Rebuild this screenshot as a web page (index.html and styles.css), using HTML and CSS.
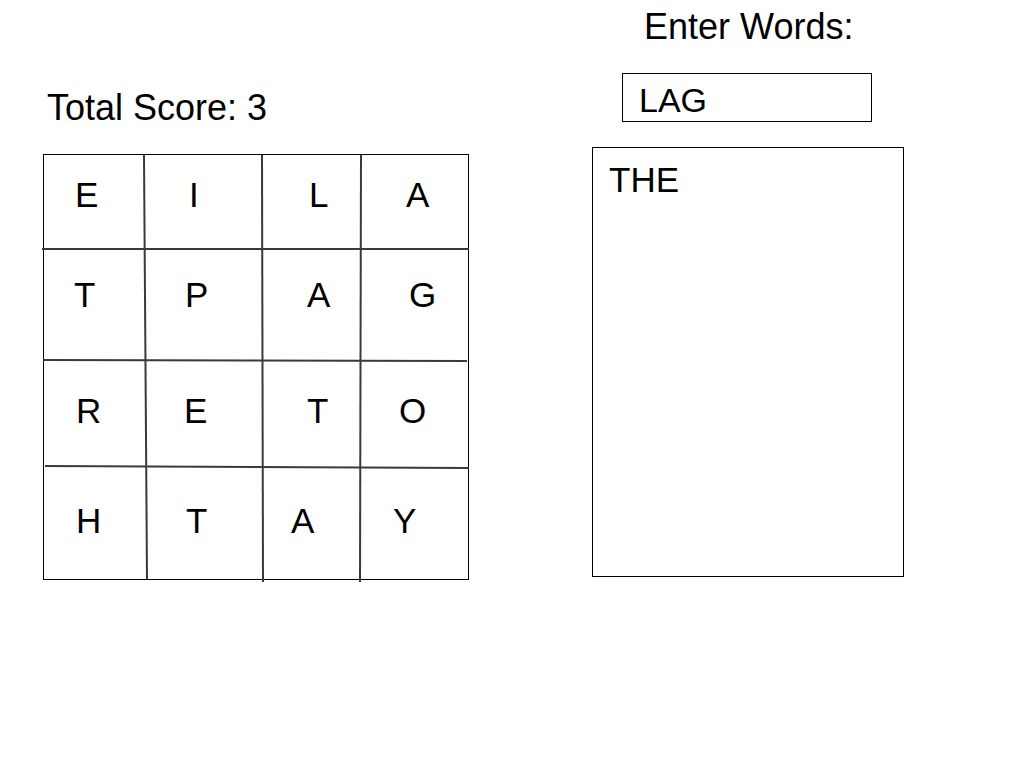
FILE: index.html
```html
<!DOCTYPE html>
<html>
<head>
<meta charset="utf-8">
<title>Word Game</title>
<link rel="stylesheet" href="styles.css">
</head>
<body>
<div class="page">
  <section class="left">
    <div class="score">Total Score: 3</div>
    <div class="board">
      <div class="cells">
        <div class="cell">E</div><div class="cell">I</div><div class="cell">L</div><div class="cell">A</div>
        <div class="cell">T</div><div class="cell">P</div><div class="cell">A</div><div class="cell">G</div>
        <div class="cell">R</div><div class="cell">E</div><div class="cell">T</div><div class="cell">O</div>
        <div class="cell">H</div><div class="cell">T</div><div class="cell">A</div><div class="cell">Y</div>
      </div>
      <svg class="lines" width="426" height="430" viewBox="0 0 426 430">
        <line x1="101" y1="1" x2="104" y2="425"/>
        <line x1="219" y1="1" x2="220" y2="428"/>
        <line x1="318" y1="1" x2="317" y2="428"/>
        <line x1="-1" y1="95" x2="426" y2="95"/>
        <line x1="0" y1="206" x2="424" y2="207"/>
        <line x1="2" y1="312" x2="426" y2="314"/>
      </svg>
    </div>
  </section>
  <section class="right">
    <div class="title">Enter Words:</div>
    <div class="entry">LAG</div>
    <div class="words">THE</div>
  </section>
</div>
</body>
</html>
```

FILE: styles.css
```css
html, body {
  margin: 0;
  padding: 0;
  background: #fff;
}
body {
  font-family: "Liberation Sans", Arial, sans-serif;
  color: #000;
  width: 1024px;
  height: 768px;
  overflow: hidden;
}
.page {
  display: flex;
  align-items: flex-start;
}
.left {
  padding-left: 43px;
  width: 426px;
  flex: none;
}
.score {
  font-size: 36px;
  line-height: 1;
  margin-top: 90px;
  padding-left: 4px;
  height: 35px;
}
.board {
  position: relative;
  margin-top: 29px;
  width: 424px;
  height: 424px;
  border: 1px solid #000;
}
.cells {
  display: grid;
  grid-template-columns: 101px 117px 99px 107px;
  grid-template-rows: 94px 111px 106px 113px;
}
.cell {
  font-size: 35px;
  line-height: 1;
  box-sizing: border-box;
}
.cell:nth-child(-n+4) { padding-top: 22px; }
.cell:nth-child(n+5):nth-child(-n+8) { padding-top: 28px; }
.cell:nth-child(n+9):nth-child(-n+12) { padding-top: 33px; }
.cell:nth-child(n+13) { padding-top: 37px; }

.cell:nth-child(1) { padding-left: 31px; }
.cell:nth-child(2) { padding-left: 44px; }
.cell:nth-child(3) { padding-left: 47px; }
.cell:nth-child(4) { padding-left: 45px; }
.cell:nth-child(5) { padding-left: 30px; }
.cell:nth-child(6) { padding-left: 40px; }
.cell:nth-child(7) { padding-left: 45px; }
.cell:nth-child(8) { padding-left: 48px; }
.cell:nth-child(9) { padding-left: 32px; }
.cell:nth-child(10) { padding-left: 39px; }
.cell:nth-child(11) { padding-left: 45px; }
.cell:nth-child(12) { padding-left: 38px; }
.cell:nth-child(13) { padding-left: 32px; }
.cell:nth-child(14) { padding-left: 41px; }
.cell:nth-child(15) { padding-left: 29px; }
.cell:nth-child(16) { padding-left: 32px; }

.lines {
  position: absolute;
  left: -1px;
  top: -1px;
  overflow: visible;
  pointer-events: none;
}
.lines line {
  stroke: #3a3a3a;
  stroke-width: 2;
}
.right {
  margin-left: 123px;
  flex: none;
}
.title {
  font-size: 36px;
  line-height: 1;
  margin-top: 9px;
  padding-left: 52px;
}
.entry {
  margin-top: 28px;
  margin-left: 30px;
  width: 250px;
  height: 49px;
  box-sizing: border-box;
  border: 1px solid #000;
  font-size: 34px;
  line-height: 1;
  padding: 9px 0 0 16px;
}
.words {
  margin-top: 25px;
  width: 312px;
  height: 430px;
  box-sizing: border-box;
  border: 1px solid #000;
  font-size: 35px;
  line-height: 1;
  padding: 14px 0 0 16px;
}
```
